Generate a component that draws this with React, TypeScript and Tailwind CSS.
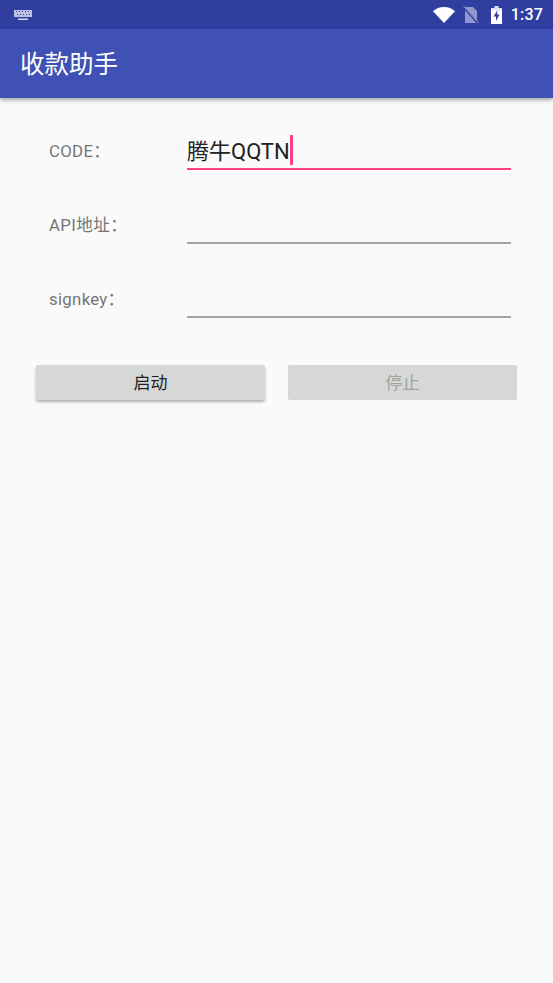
const FONT = "font-['Roboto','Noto_Sans_CJK_SC',sans-serif]";

function KeyboardIcon() {
  return (
    <svg width="18" height="10" viewBox="0 0 18 10" fill="#d5d8ee">
      <path d="M0 0h18v7H0z" opacity="0.85" />
      <path
        d="M2 1h1v1H2zM5 1h1v1H5zM8 1h1v1H8zM11 1h1v1h-1zM14 1h1v1h-1zM3 4h1v1H3zM6 4h1v1H6zM9 4h1v1H9zM12 4h1v1h-1zM15 4h1v1h-1z"
        fill="#303f9f"
      />
      <path d="M4 8.500h10V10H4z" />
    </svg>
  );
}

function StatusIcons() {
  return (
    <div className="flex items-center">
      {/* wifi */}
      <svg width="22" height="16" viewBox="0 0 22 16" className="mr-[8px] mt-[1px]">
        <path d="M0 4.200C3 1.600 6.700 0 11 0s8 1.600 11 4.200L11 16z" fill="#fff" />
      </svg>
      {/* no sim */}
      <svg width="16" height="18" viewBox="0 0 16 18" className="mr-[11px] mt-[1px]">
        <path d="M2 1h8l4 4v12H2z" fill="#8f98cf" />
        <path d="M0 0.500 15 17.500" stroke="#303f9f" strokeWidth="2" />
        <path d="M0.500 0 15.500 17" stroke="#8f98cf" strokeWidth="1" />
      </svg>
      {/* battery charging */}
      <svg width="13" height="18" viewBox="0 0 13 18" className="mr-[8px]">
        <path d="M4.500 0h4v2H12v2H1V2h3.500z" fill="#e0e2f2" />
        <path d="M1 4h11v14H1z" fill="#fff" />
        <path d="M7.500 4 3.500 10.500H6V15l3.500-6.500H7z" fill="#303f9f" />
      </svg>
      <span className="text-white text-[16px] font-medium leading-none tracking-[0.2px]">1:37</span>
    </div>
  );
}

function Field({ label, value, focused }: { label: string; value?: string; focused?: boolean }) {
  return (
    <div className="flex items-end h-[74px]">
      <span className="w-[138px] pb-[7px] text-[16.800px] leading-[24px] tracking-[0.3px] text-[#757575]">
        {label}
      </span>
      <div
        className={
          focused
            ? "w-[324px] h-[40px] flex items-end border-b-2 border-[#ff4081]"
            : "w-[324px] h-[40px] flex items-end border-b-2 border-[#a3a3a3]"
        }
      >
        <span className="text-[22px] leading-[30px] mb-[1px] text-[#212121] whitespace-nowrap">{value}</span>
        {focused && <span className="w-[3px] h-[30px] mb-[3px] bg-[#ff4081]" />}
      </div>
    </div>
  );
}

export default function App() {
  return (
    <div className={`${FONT} w-[553px] h-[983px] bg-[#fafafa] flex flex-col overflow-hidden`}>
      <div className="h-[29px] shrink-0 bg-[#303f9f] flex items-center justify-between pl-[14px] pr-[10px]">
        <KeyboardIcon />
        <StatusIcons />
      </div>
      <header className="h-[69px] shrink-0 bg-[#3f51b5] flex items-center pl-[20px] pt-[3px] shadow-[0_2px_4px_rgba(0,0,0,0.35)]">
        <h1 className="text-white text-[24.500px] font-normal leading-none">收款助手</h1>
      </header>

      <main className="flex flex-col">
        <div className="flex flex-col pl-[49px] mt-[-2px]">
          <Field label="CODE：" value="腾牛QQTN" focused />
          <Field label="API地址：" />
          <Field label="signkey：" />
        </div>
        <div className="flex gap-[23px] pl-[36px] mt-[47px]">
          <button className="w-[229px] h-[35px] pt-[2px] rounded-[2px] bg-[#d6d7d7] text-[17px] text-[#1f1f1f] shadow-[0_2px_3px_rgba(0,0,0,0.3)]">
            启动
          </button>
          <button
            disabled
            className="w-[229px] h-[35px] pt-[2px] rounded-[2px] bg-[#d6d7d7] text-[17px] text-[#a1a1a1]"
          >
            停止
          </button>
        </div>
      </main>
    </div>
  );
}
